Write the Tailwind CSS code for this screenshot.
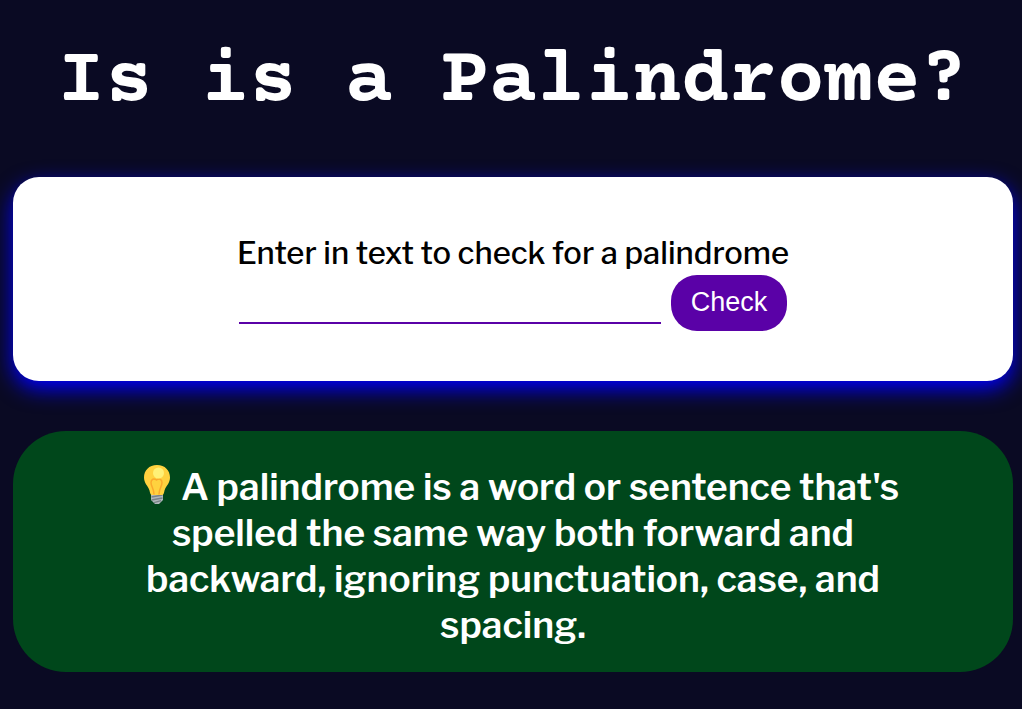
<!DOCTYPE html>
<html lang="en">
<head>
<meta charset="utf-8">
<meta name="viewport" content="width=device-width, initial-scale=1">
<title>Is is a Palindrome?</title>
<script src="https://cdn.jsdelivr.net/npm/@tailwindcss/browser@4"></script>
</head>
<body class="min-h-screen bg-[#0a0a23] font-['Libre_Franklin','Liberation_Sans',Arial,sans-serif] text-white">
<main class="flex flex-col items-center pt-[37px] pr-[9px] pb-9 pl-[13px]">
  <h1 class="text-center font-['Courier_Prime','Liberation_Mono','Courier_New',monospace] text-[80px] leading-[90px] font-bold whitespace-nowrap">Is is a Palindrome?</h1>
  <form class="mt-[50px] flex w-full flex-col items-center rounded-[26px] bg-white pt-[56px] pb-[50px] text-black shadow-[0_8px_21px_#0000ff]">
    <label for="text-input" class="mb-0.5 text-[31px] leading-10 font-medium">Enter in text to check for a palindrome</label>
    <div class="flex items-end gap-[10px]">
      <input id="text-input" type="text" class="mb-[7px] h-10 w-[422px] border-b-2 border-[#5a01a7] text-center text-2xl outline-none">
      <button type="button" class="h-14 w-[116px] rounded-[26px] bg-[#5a01a7] pb-0.5 font-['Liberation_Sans',Arial,sans-serif] text-[27px] leading-8 text-white">Check</button>
    </div>
  </form>
  <section class="mt-[50px] w-full rounded-[53px] bg-[#00471b] px-[100px] pt-[33px] pb-6 text-center text-[37px] leading-[46px] font-semibold">
    <p><svg class="mr-2.5 ml-4 inline-block h-10 w-7 align-[-5px]" viewBox="0 0 28 40" role="img" aria-label="Light bulb"><path d="M8 29h12v6l-4 4h-4l-4-4z" fill="#b0b8bc"/><path d="M8.500 32l11-2M8.500 35l11-2M11 37.500l7-2" stroke="#788287" stroke-width="1.3"/><path d="M14 0C6 0 1 5.500 1 12.500c0 6 4 8 5.500 13C7 28 7.500 30 9 30h10c1.500 0 2-2 2.500-4.500C23 20.500 27 18.500 27 12.500 27 5.500 22 0 14 0z" fill="#ffd23f"/><path d="M11 29.500c0-6-3-8-3-12 0-3.500 3-4.500 5.500-2.500 2.500-2 5.500-1 5.500 2.500 0 4-3 6-3 12" fill="none" stroke="#fba92c" stroke-width="1.500"/><circle cx="15.500" cy="8" r="5.500" fill="#fff176"/></svg>A palindrome is a word or sentence that's<br>spelled the same way both forward and<br>backward, ignoring punctuation, case, and<br>spacing.</p>
  </section>
</main>
</body>
</html>
